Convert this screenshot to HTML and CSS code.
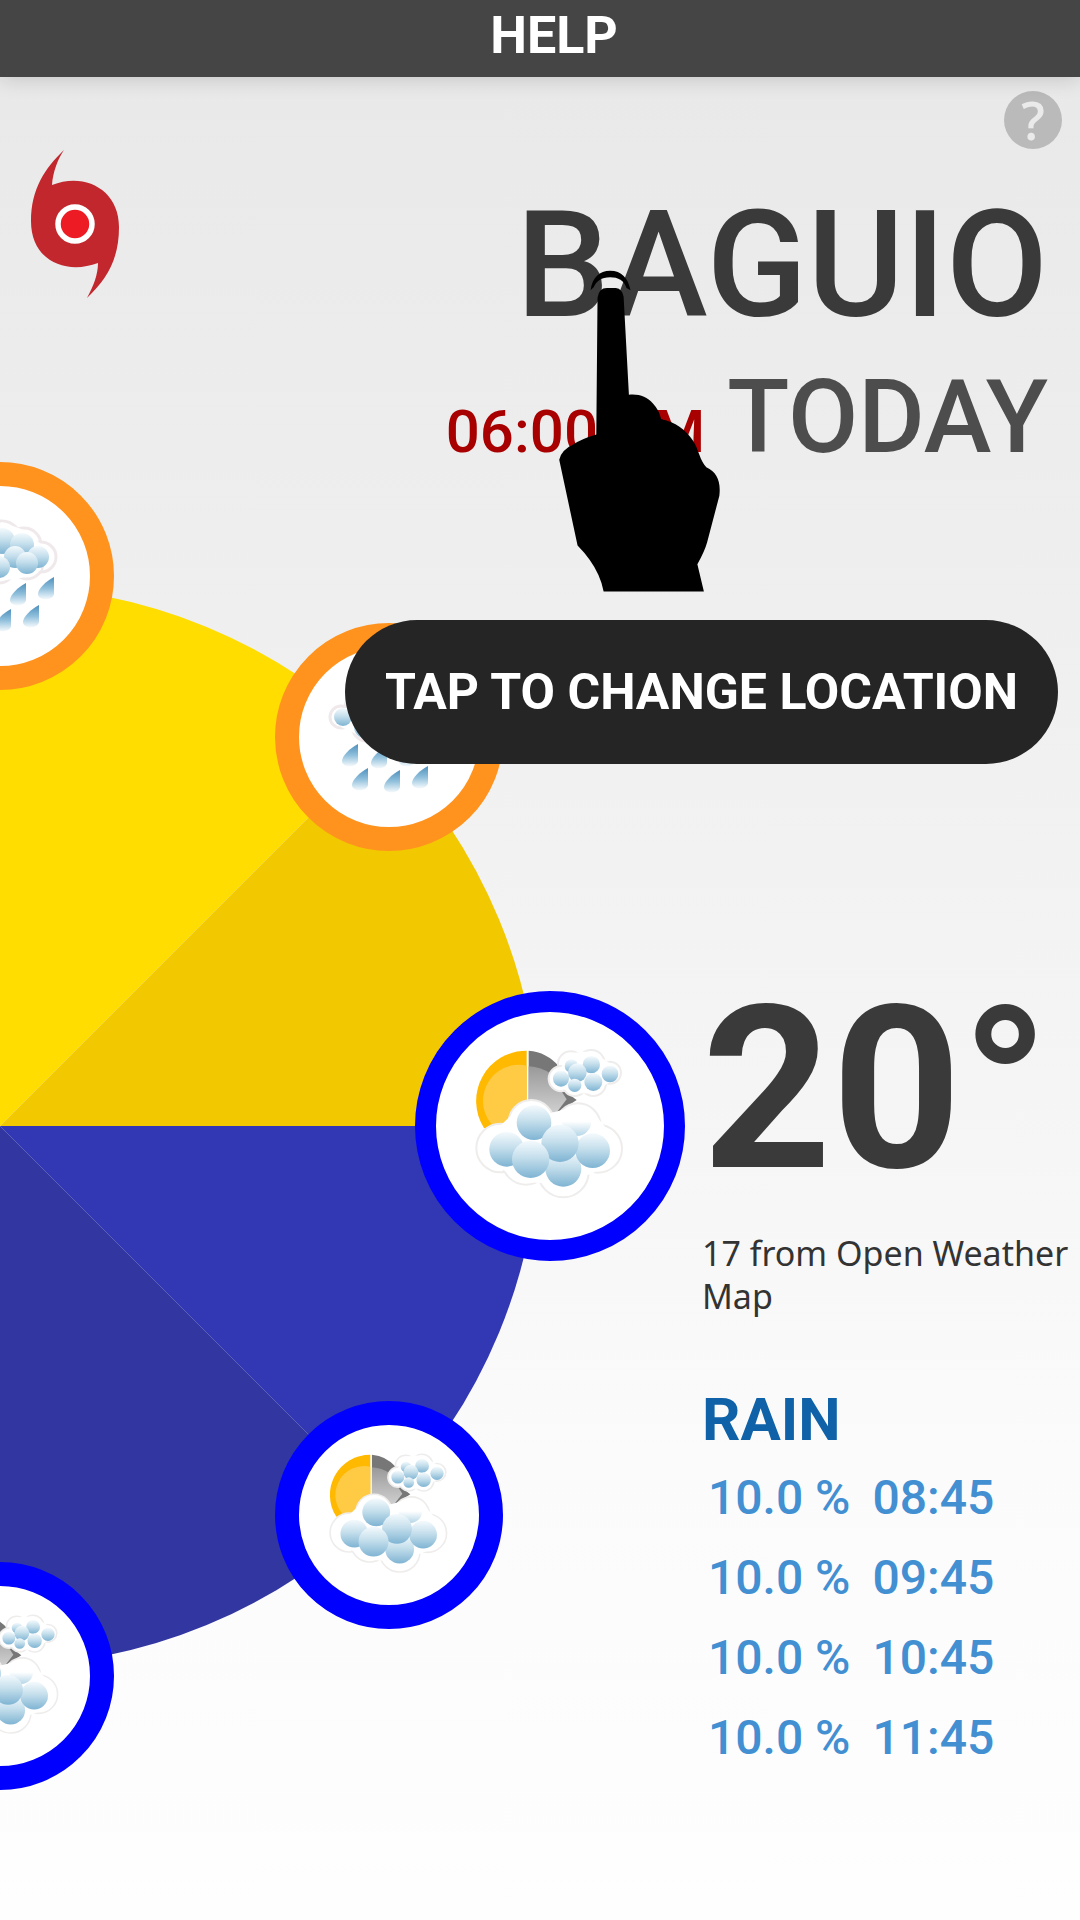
FILE: index.html
```html
<!DOCTYPE html>
<html lang="en">
<head>
  <meta charset="utf-8">
  <meta name="viewport" content="width=device-width, initial-scale=1">
  <title>Help</title>
  <link rel="stylesheet" href="styles.css">
</head>
<body>
  <header class="app-bar">
    <h1 class="app-bar-title">HELP</h1>
  </header>
  <main class="weather">
    <div class="toolbar">
      <button class="help-button" type="button" aria-label="Help">?</button>
    </div>
    <section class="place">
      <svg class="storm" viewBox="30 150 90 150" aria-hidden="true">
        <path fill="#c1272d" d="M64 151C58 160 53 172 52 186C84 173 119 190 119 228C119 260 107 280 87 299C93 288 98 276 98 264C66 276 31 262 31 222C31 190 45 169 64 151Z"/>
        <circle cx="75" cy="225" r="17" fill="#ed1c24" stroke="#fff" stroke-width="5.500"/>
      </svg>
      <div class="place-text">
        <h2 class="city">BAGUIO</h2>
        <p class="when"><time class="hour">06:00 AM</time><span class="day">TODAY</span></p>
      </div>
      <svg class="hand" viewBox="290 660 400 792" aria-hidden="true">
        <path d="M370 712C374 680 392 664 418 664C446 664 462 682 468 712L458 706C452 688 438 680 418 680C396 680 384 690 378 704Z"/>
        <path d="M387 730Q390 706 410 706H432Q448 708 451 728L464 968C490 966 508 972 523 990Q538 1006 543 1028C580 1038 600 1050 622 1082C636 1105 638 1130 654 1146C680 1158 690 1180 686 1216L656 1330Q650 1352 632 1384L648 1451H402Q394 1410 368 1374Q356 1356 338 1338L293 1128Q298 1104 328 1090Q350 1076 384 1066Z"/>
      </svg>
    </section>
    <section class="forecast">
      <svg class="dial" viewBox="0 0 686 1328" role="img" aria-label="Forecast dial">
        <defs>
          <linearGradient id="puff" x1="0" y1="0" x2="0" y2="1">
            <stop offset="0" stop-color="#f4fafd"/>
            <stop offset=".45" stop-color="#c5dfec"/>
            <stop offset="1" stop-color="#7fb4d3"/>
          </linearGradient>
          <linearGradient id="mist" x1="0" y1="0" x2="0" y2="1">
            <stop offset=".5" stop-color="#fff"/>
            <stop offset="1" stop-color="#b5d6e7"/>
          </linearGradient>
          <linearGradient id="drop-fill" x1="0" y1="0" x2="0" y2="1">
            <stop offset="0" stop-color="#4d8fbb"/>
            <stop offset=".5" stop-color="#8fbfdb"/>
            <stop offset="1" stop-color="#f4f9fc"/>
          </linearGradient>
          <linearGradient id="moon" x1="0" y1="0" x2="0" y2="1">
            <stop offset="0" stop-color="#999"/>
            <stop offset="1" stop-color="#d0d0d0"/>
          </linearGradient>
          <path id="drop" fill="url(#drop-fill)" d="M8-11C0-7-8 1-8 6C-8 13 7 13 8 6Z"/>
          <g id="rain">
            <g fill="#fff" stroke="#f0e9ec" stroke-width="3">
              <circle cx="-48" cy="-20" r="11"/><circle cx="-30" cy="-29" r="14"/><circle cx="-22" cy="-11" r="15"/>
              <circle cx="2" cy="-36" r="19"/><circle cx="24" cy="-31" r="17"/><circle cx="41" cy="-19" r="15"/>
              <circle cx="27" cy="-13" r="16"/><circle cx="-1" cy="-9" r="16"/>
            </g>
            <path fill="#fff" d="M-48-29H-30L2-54L24-46L41-32V-6L27 1L0 5L-22 2L-48-10Z"/>
            <g fill="url(#puff)">
              <circle cx="2" cy="-35" r="13"/><circle cx="22" cy="-31" r="12"/><circle cx="-30" cy="-26" r="11"/>
              <circle cx="-46" cy="-20" r="9"/><circle cx="-14" cy="-23" r="12"/><circle cx="38" cy="-19" r="11"/>
              <circle cx="15" cy="-19" r="11"/><circle cx="27" cy="-13" r="11"/><circle cx="-1" cy="-9" r="11"/><circle cx="-24" cy="-10" r="11"/>
            </g>
            <use href="#drop" x="-39" y="18"/><use href="#drop" x="-10" y="20"/><use href="#drop" x="18" y="18"/><use href="#drop" x="46" y="12"/>
            <use href="#drop" x="-29" y="42"/><use href="#drop" x="3" y="44"/><use href="#drop" x="31" y="40"/>
          </g>
          <g id="cloudy" transform="translate(-150 -156) scale(.333333)">
            <path fill="#ffb900" d="M380 242A151 151 0 0 0 252 474L380 500Z"/>
            <path fill="#ffcb45" d="M380 287A108 108 0 0 0 286 474L380 500Z"/>
            <path fill="#777" d="M386 242Q440 246 478 290L490 360L530 390L470 430L386 400Z"/>
            <path fill="url(#moon)" d="M386 289Q425 292 450 310L500 388L468 430L386 405Z"/>
            <g fill="#fff" stroke="#efedec" stroke-width="6">
              <circle cx="512" cy="282" r="38"/><circle cx="574" cy="280" r="40"/><circle cx="484" cy="326" r="38"/>
              <circle cx="630" cy="308" r="33"/><circle cx="524" cy="342" r="36"/><circle cx="580" cy="340" r="38"/>
              <circle cx="394" cy="458" r="68"/><circle cx="534" cy="468" r="68"/><circle cx="302" cy="534" r="73"/>
              <circle cx="594" cy="536" r="72"/><circle cx="378" cy="572" r="72"/><circle cx="490" cy="606" r="76"/>
            </g>
            <path fill="#fff" d="M484 290L512 249L574 244L630 280V335L580 370L524 370L480 355ZM302 466L340 430L394 395L450 430L530 408L590 440L640 500L650 550L600 600L550 620L490 670L430 640L370 635L310 600L240 560L240 510Z"/>
            <g fill="url(#puff)">
              <circle cx="514" cy="288" r="20"/><circle cx="574" cy="284" r="26"/><circle cx="483" cy="326" r="24"/>
              <circle cx="532" cy="308" r="28"/><circle cx="630" cy="312" r="25"/><circle cx="524" cy="346" r="20"/>
              <circle cx="580" cy="336" r="27"/>
              <circle cx="402" cy="458" r="52"/>
            </g>
            <circle cx="530" cy="454" r="44" fill="url(#mist)"/>
            <g fill="url(#puff)">
              <circle cx="320" cy="538" r="52"/><circle cx="490" cy="596" r="54"/><circle cx="578" cy="542" r="52"/>
              <circle cx="480" cy="520" r="56"/><circle cx="392" cy="568" r="56"/>
            </g>
          </g>
        </defs>
        <path fill="#ffdd00" d="M0 664V124A540 540 0 0 1 382 282Z"/>
        <path fill="#f2c800" d="M0 664L382 282A540 540 0 0 1 540 664Z"/>
        <path fill="#3237b3" d="M0 664H540A540 540 0 0 1 382 1046Z"/>
        <path fill="#3236a0" d="M0 664L382 1046A540 540 0 0 1 0 1204Z"/>
        <path stroke="#5b5fb8" d="M0 664L382 1046"/>
        <g fill="#fff" stroke="#ff931e" stroke-width="24">
          <circle cx="0" cy="114" r="102"/>
          <circle cx="389" cy="275" r="102"/>
        </g>
        <g fill="#fff" stroke="#0000ff" stroke-width="24">
          <circle cx="389" cy="1053" r="102"/>
          <circle cx="0" cy="1214" r="102"/>
          <circle cx="550" cy="664" r="124.500" stroke-width="21"/>
        </g>
        <use href="#rain" x="0" y="114"/>
        <use href="#rain" x="389" y="275"/>
        <use href="#cloudy" transform="translate(550 664)"/>
        <use href="#cloudy" transform="translate(389 1053) scale(.8)"/>
        <use href="#cloudy" transform="translate(0 1214) scale(.8)"/>
      </svg>
      <div class="readings">
        <p class="temperature">20°</p>
        <p class="source">17 from Open Weather Map</p>
        <table class="rain">
          <caption>RAIN</caption>
          <tbody>
            <tr><td>10.0 %</td><td>08:45</td></tr>
            <tr><td>10.0 %</td><td>09:45</td></tr>
            <tr><td>10.0 %</td><td>10:45</td></tr>
            <tr><td>10.0 %</td><td>11:45</td></tr>
          </tbody>
        </table>
      </div>
      <p class="hint">TAP TO CHANGE LOCATION</p>
    </section>
  </main>
</body>
</html>
```
FILE: styles.css
```css
* {
  box-sizing: border-box;
}

body {
  margin: 0;
  min-height: 100vh;
  display: flex;
  flex-direction: column;
  font-family: Roboto, "Liberation Sans", sans-serif;
  color: #3a3a3a;
  background: #fefefe;
}

h1,
h2,
p {
  margin: 0;
}

.app-bar {
  position: relative;
  z-index: 1;
  padding: 6px 0 11px 28px;
  background: #454545;
  box-shadow: 0 2px 20px rgba(0, 0, 0, 0.16);
  text-align: center;
}

.app-bar-title {
  font-size: 52px;
  line-height: 60px;
  font-weight: 700;
  color: #fff;
}

.weather {
  flex: 1;
  overflow: hidden;
  background: linear-gradient(#e9e9e9, #eeeeee 25%, #f5f5f5 55%, #fbfbfb 75%, #fefefe);
}

.toolbar {
  display: flex;
  justify-content: flex-end;
  padding: 14px 18px 0;
}

.help-button {
  width: 58px;
  height: 58px;
  padding: 0;
  border: 0;
  border-radius: 50%;
  background: #bababa;
  color: #eaeaea;
  font: 600 52px/58px "Open Sans", sans-serif;
}

.place {
  position: relative;
  display: flex;
  justify-content: space-between;
  align-items: flex-start;
  padding: 0 32px 0 30px;
}

.storm {
  width: 90px;
  height: 150px;
}

.place-text {
  padding-top: 41px;
  text-align: right;
}

.city {
  font-size: 148px;
  line-height: 152px;
  font-weight: 500;
}

.when {
  display: flex;
  justify-content: flex-end;
  align-items: baseline;
  gap: 22px;
  margin-top: 30px;
  line-height: 90px;
  font-weight: 500;
}

.hour {
  font-size: 60px;
  line-height: 60px;
  color: #a80000;
}

.day {
  font-size: 102px;
  color: #4d4d4d;
}

.hand {
  position: absolute;
  z-index: 1;
  top: 120px;
  right: 359px;
  width: 163px;
  height: 323px;
}

.forecast {
  position: relative;
  display: grid;
  grid-template-columns: 686fr 394fr;
}

.dial {
  display: block;
  width: 100%;
}

.readings {
  padding: 508px 0 0 16px;
}

.temperature {
  font-size: 226px;
  line-height: 240px;
  font-weight: 700;
}

.source {
  margin-top: 22px;
  font-family: "Noto Sans", sans-serif;
  font-size: 34px;
  line-height: 43px;
  color: #333;
}

.rain {
  margin-top: 70px;
  border-collapse: collapse;
  font-size: 48px;
  font-weight: 500;
  line-height: 80px;
  color: #428fd2;
}

.rain caption {
  padding-bottom: 6px;
  font-size: 60px;
  line-height: 64px;
  font-weight: 700;
  text-align: left;
  color: #0f62a8;
}

.rain td {
  padding: 0 16px 0 6px;
}

.hint {
  position: absolute;
  top: 158px;
  right: 22px;
  padding: 0 40px;
  border-radius: 72px;
  background: #252525;
  color: #fff;
  font-size: 50px;
  line-height: 144px;
  font-weight: 700;
  white-space: nowrap;
}
```
